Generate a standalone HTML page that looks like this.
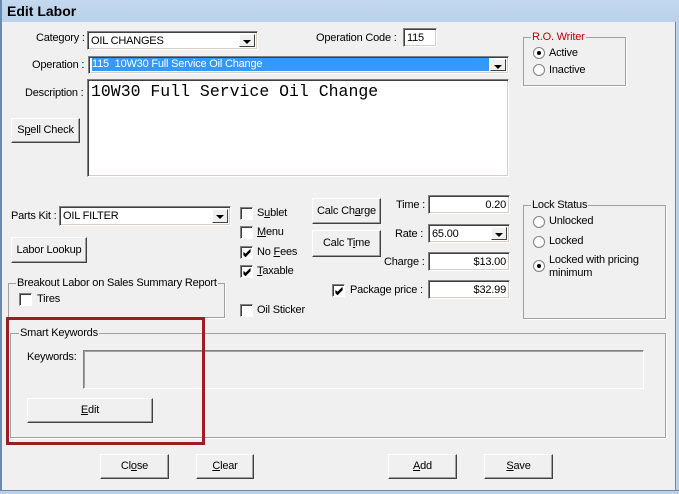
<!DOCTYPE html><html><head><style>
*{box-sizing:border-box}
body{margin:0;width:679px;height:494px;overflow:hidden;background:#f0f0f0;font-family:"Liberation Sans",sans-serif;font-size:11px;color:#000;position:relative;letter-spacing:-0.2px}
.a{position:absolute;white-space:nowrap}
.in{position:absolute;background:#fff;border:1px solid;border-color:#808080 #fff #fff #808080;box-shadow:inset 1px 1px 0 #404040,inset -1px -1px 0 #d4d0c8;padding:3px 3px 0;font-size:11px;line-height:13px}
.btn{position:absolute;background:#f0f0f0;border:1px solid;border-color:#fff #404040 #404040 #fff;box-shadow:inset -1px -1px 0 #a0a0a0;text-align:center;font-size:11px}
.dd{position:absolute;right:2px;top:2px;bottom:2px;width:16px;background:#f0f0f0;border:1px solid;border-color:#fff #404040 #404040 #fff}
.dd:after{content:"";position:absolute;left:3px;top:5px;border:4px solid transparent;border-top:4px solid #000;border-bottom:0}
.cb{position:absolute;width:13px;height:13px;background:#fff;border:1px solid;border-color:#808080 #fff #fff #808080;box-shadow:inset 1px 1px 0 #404040}
.cb svg{position:absolute;left:1px;top:1px}
.rb{position:absolute;width:12px;height:12px;border-radius:50%;background:#fff;border:1px solid #808080}
.rb.on:after{content:"";position:absolute;left:3px;top:3px;width:4px;height:4px;border-radius:50%;background:#000}
.grp{position:absolute;border:1px solid #a0a0a0;box-shadow:1px 1px 0 #fff}
.gt{position:absolute;background:#f0f0f0;padding:0 1px;top:-7px}
u{text-decoration:underline}
</style></head><body>
<div class="a" style="left:0;top:0;width:679px;height:22px;background:linear-gradient(#c4d8ef,#b9d1ea);font-weight:bold;font-size:14px;padding:3px 7px;letter-spacing:0">Edit Labor</div>
<div class="a" style="left:0;top:0;width:2px;height:494px;background:#6a8bb0"></div>
<div class="a" style="right:0;top:22px;width:4px;height:472px;background:#b9d1ea;border-left:1px solid #6a8bb0"></div>
<div class="a" style="left:0;bottom:0;width:679px;height:4px;background:#b9d1ea;border-top:1px solid #6a8bb0"></div>

<div class="a" style="left:36px;top:32px">Category :</div>
<div class="in" style="left:87px;top:31px;width:171px;height:19px">OIL CHANGES<div class="dd"></div></div>
<div class="a" style="left:316px;top:32px">Operation Code :</div>
<div class="in" style="left:403px;top:28px;width:34px;height:19px">115</div>

<div class="grp" style="left:523px;top:37px;width:103px;height:49px"><span class="gt" style="left:7px;color:#c00000">R.O. Writer</span></div>
<div class="rb on" style="left:533px;top:47px"></div><div class="a" style="left:549px;top:47px">Active</div>
<div class="rb" style="left:533px;top:64px"></div><div class="a" style="left:549px;top:64px">Inactive</div>

<div class="a" style="left:32px;top:59px">Operation :</div>
<div class="in" style="left:88px;top:56px;width:421px;height:18px;padding:1px 3px"><span style="background:#3399ff;color:#fff;display:block;height:13px;line-height:13px;margin-right:16px">115&nbsp; 10W30 Full Service Oil Change</span><div class="dd"></div></div>

<div class="a" style="left:25px;top:87px">Description :</div>
<div class="in" style="left:87px;top:79px;width:422px;height:98px;font-family:'Liberation Mono',monospace;font-size:16.5px;padding:3px 3px;line-height:18px;letter-spacing:0">10W30 Full Service Oil Change</div>
<div class="btn" style="left:11px;top:118px;width:69px;height:25px;line-height:23px">S<u>p</u>ell Check</div>

<div class="a" style="left:11px;top:210px">Parts Kit :</div>
<div class="in" style="left:59px;top:206px;width:172px;height:20px">OIL FILTER<div class="dd"></div></div>
<div class="btn" style="left:11px;top:237px;width:76px;height:26px;line-height:24px">Labor Lookup</div>

<div class="cb" style="left:240px;top:207px"></div><div class="a" style="left:257px;top:207px">S<u>u</u>blet</div>
<div class="cb" style="left:240px;top:226px"></div><div class="a" style="left:257px;top:226px"><u>M</u>enu</div>
<div class="cb" style="left:240px;top:246px"><svg width="10" height="10"><path d="M1.5 4.5L3.5 6.5L8.5 1.5M1.5 5.5L3.5 7.5L8.5 2.5M1.5 6.5L3.5 8.5L8.5 3.5" stroke="#000" stroke-width="1" fill="none"/></svg></div><div class="a" style="left:257px;top:246px">No <u>F</u>ees</div>
<div class="cb" style="left:240px;top:265px"><svg width="10" height="10"><path d="M1.5 4.5L3.5 6.5L8.5 1.5M1.5 5.5L3.5 7.5L8.5 2.5M1.5 6.5L3.5 8.5L8.5 3.5" stroke="#000" stroke-width="1" fill="none"/></svg></div><div class="a" style="left:257px;top:265px"><u>T</u>axable</div>
<div class="cb" style="left:240px;top:304px"></div><div class="a" style="left:257px;top:304px">Oil Sticker</div>

<div class="btn" style="left:312px;top:198px;width:69px;height:26px;line-height:24px">Calc Ch<u>a</u>rge</div>
<div class="btn" style="left:312px;top:230px;width:69px;height:27px;line-height:25px">Calc T<u>i</u>me</div>

<div class="a" style="left:396px;top:199px">Time :</div>
<div class="in" style="left:428px;top:195px;width:82px;height:19px;text-align:right">0.20</div>
<div class="a" style="left:395px;top:228px">Rate :</div>
<div class="in" style="left:428px;top:224px;width:82px;height:19px">65.00<div class="dd"></div></div>
<div class="a" style="left:384px;top:256px">Charge :</div>
<div class="in" style="left:428px;top:252px;width:82px;height:19px;text-align:right">$13.00</div>
<div class="cb" style="left:332px;top:284px"><svg width="10" height="10"><path d="M1.5 4.5L3.5 6.5L8.5 1.5M1.5 5.5L3.5 7.5L8.5 2.5M1.5 6.5L3.5 8.5L8.5 3.5" stroke="#000" stroke-width="1" fill="none"/></svg></div>
<div class="a" style="left:350px;top:284px">Package price :</div>
<div class="in" style="left:428px;top:280px;width:82px;height:19px;text-align:right">$32.99</div>

<div class="grp" style="left:523px;top:205px;width:143px;height:114px"><span class="gt" style="left:7px">Lock Status</span></div>
<div class="rb" style="left:533px;top:216px"></div><div class="a" style="left:549px;top:215px">Unlocked</div>
<div class="rb" style="left:533px;top:236px"></div><div class="a" style="left:549px;top:235px">Locked</div>
<div class="rb on" style="left:533px;top:260px"></div><div class="a" style="left:549px;top:254px;line-height:13px">Locked with pricing<br>minimum</div>

<div class="grp" style="left:8px;top:283px;width:217px;height:35px"><span class="gt" style="left:7px">Breakout Labor on Sales Summary Report</span></div>
<div class="cb" style="left:19px;top:293px"></div><div class="a" style="left:37px;top:293px">Tires</div>

<div class="grp" style="left:10px;top:333px;width:656px;height:105px"><span class="gt" style="left:8px">Smart Keywords</span></div>
<div class="a" style="left:27px;top:351px">Keywords:</div>
<div class="a" style="left:83px;top:350px;width:561px;height:39px;border:1px solid;border-color:#808080 #fff #fff #808080;box-shadow:inset 1px 1px 0 #a0a0a0"></div>
<div class="btn" style="left:27px;top:398px;width:126px;height:25px;line-height:23px"><u>E</u>dit</div>

<div class="a" style="left:6px;top:317px;width:199px;height:128px;border:3px solid #a01c24"></div>

<div class="btn" style="left:100px;top:454px;width:69px;height:25px;line-height:23px">Cl<u>o</u>se</div>
<div class="btn" style="left:196px;top:454px;width:58px;height:25px;line-height:23px"><u>C</u>lear</div>
<div class="btn" style="left:388px;top:454px;width:69px;height:25px;line-height:23px"><u>A</u>dd</div>
<div class="btn" style="left:484px;top:454px;width:69px;height:25px;line-height:23px"><u>S</u>ave</div>
</body></html>
